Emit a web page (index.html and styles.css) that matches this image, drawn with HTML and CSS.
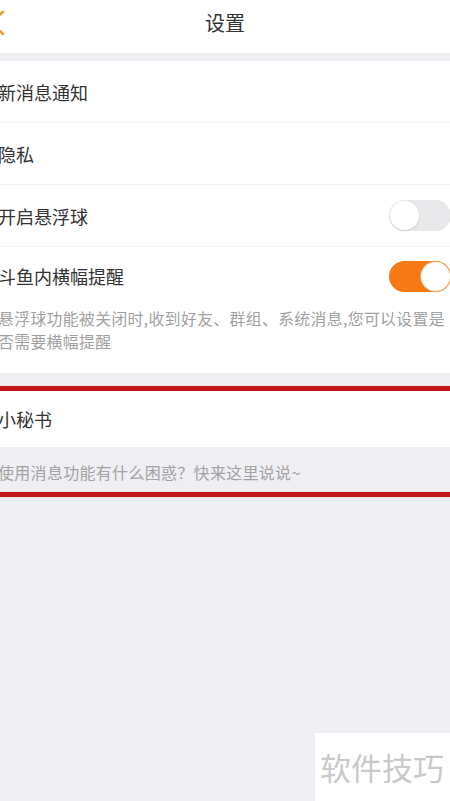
FILE: index.html
```html
<!DOCTYPE html>
<html lang="zh">
<head>
<meta charset="utf-8">
<title>设置</title>
<link rel="stylesheet" href="styles.css">
</head>
<body>
<header class="topbar">
  <svg class="back" width="12" height="28" viewBox="0 0 12 28"><polyline points="3,3 -9,13 3,25" fill="none" stroke="#f0982c" stroke-width="2.5" stroke-linecap="round" stroke-linejoin="round"/></svg>
  <h1 class="title">设置</h1>
</header>
<div class="gap"></div>
<section class="group">
  <div class="row"><span class="label">新消息通知</span></div>
  <div class="row"><span class="label">隐私</span></div>
  <div class="row"><span class="label">开启悬浮球</span><span class="switch"><span class="knob"></span></span></div>
  <div class="row row-last"><span class="label">斗鱼内横幅提醒</span><span class="switch on"><span class="knob"></span></span></div>
  <p class="desc">悬浮球功能被关闭时,收到好友、群组、系统消息,您可以设置是否需要横幅提醒</p>
</section>
<div class="gap2"></div>
<div class="redline"></div>
<section class="group">
  <div class="row row-secretary"><span class="label">小秘书</span></div>
</section>
<p class="hint">使用消息功能有什么困惑？快来这里说说~</p>
<div class="redline"></div>
<div class="watermark">软件技巧</div>
</body>
</html>
```

FILE: styles.css
```css
html, body {
  margin: 0;
  padding: 0;
}
body {
  width: 450px;
  height: 801px;
  overflow: hidden;
  background: #efeef2;
  font-family: "Noto Sans CJK SC", "Noto Sans", sans-serif;
  color: #333;
  position: relative;
}
.topbar {
  height: 53px;
  background: #fff;
  display: flex;
  align-items: center;
  justify-content: center;
  position: relative;
}
.back {
  position: absolute;
  left: 0;
  top: 9px;
}
.title {
  margin: 0;
  font-size: 20px;
  font-weight: 400;
  color: #333;
  line-height: 1;
  margin-top: -8px;
}
.gap {
  height: 8px;
}
.group {
  background: #fff;
}
.row {
  height: 61px;
  display: flex;
  align-items: center;
  justify-content: space-between;
  border-bottom: 1px solid #f2f2f3;
}
.row-last {
  height: 58px;
  border-bottom: none;
}
.label {
  font-size: 18px;
  color: #333;
  margin-left: -2px;
  line-height: 1;
}
.switch {
  width: 62px;
  height: 31px;
  border-radius: 16px;
  background: #e8e8ea;
  margin-right: -1px;
  position: relative;
  box-sizing: border-box;
  display: flex;
  align-items: center;
  padding: 1px;
}
.switch .knob {
  width: 29px;
  height: 29px;
  border-radius: 50%;
  background: #fff;
  box-shadow: 0 1px 2px rgba(0,0,0,0.12);
}
.switch.on {
  background: #f67914;
  justify-content: flex-end;
}
.switch.on .knob {
  box-shadow: 0 0 0 1px #e9a45e;
}
.desc {
  margin: 0;
  padding: 2px 0 20px 0;
  margin-left: -2px;
  font-size: 15.8px;
  letter-spacing: 0.4px;
  line-height: 23px;
  color: #a0a0a0;
}
.gap2 {
  height: 13px;
}
.redline {
  height: 5px;
  background: #c4161d;
  box-shadow: 0 0 1px 0 rgba(228, 120, 110, 0.5);
}
.row-secretary {
  height: 56px;
  border-bottom: none;
}
.hint {
  margin: 0;
  height: 45px;
  box-sizing: border-box;
  padding-top: 15px;
  font-size: 16px;
  letter-spacing: 0.3px;
  line-height: 20px;
  color: #a3a3a3;
  margin-left: -2px;
}
.watermark {
  position: absolute;
  right: 0;
  bottom: 0;
  width: 135px;
  height: 68px;
  background: #fff;
  color: #c9c9c9;
  font-size: 31px;
  line-height: 68px;
  padding-left: 5px;
  box-sizing: border-box;
}
```
